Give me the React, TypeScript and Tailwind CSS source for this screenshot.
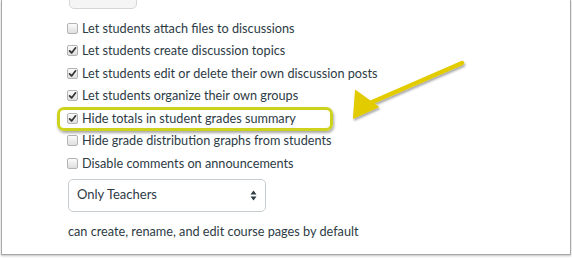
import React from 'react';

const rows: { label: string; checked: boolean }[] = [
  { label: 'Let students attach files to discussions', checked: false },
  { label: 'Let students create discussion topics', checked: true },
  { label: 'Let students edit or delete their own discussion posts', checked: true },
  { label: 'Let students organize their own groups', checked: true },
  { label: 'Hide totals in student grades summary', checked: true },
  { label: 'Hide grade distribution graphs from students', checked: false },
  { label: 'Disable comments on announcements', checked: false },
];

const Box = ({ checked }: { checked: boolean }) => (
  <span className="relative flex h-[11px] w-[11px] shrink-0 items-center justify-center rounded-[2px] border border-[#b4b4b4] bg-gradient-to-b from-[#fbfbfb] to-[#dedede]">
    {checked && (
      <svg width="9" height="9" viewBox="0 0 9 9">
        <path d="M1.6 4.8 L3.6 6.9 L7.6 1.8" fill="none" stroke="#333" strokeWidth="1.7" strokeLinecap="round" strokeLinejoin="round" />
      </svg>
    )}
  </span>
);

export default function App() {
  return (
    <div className="relative h-[258px] w-[572px] overflow-hidden bg-white" style={{ fontFamily: 'Lato, "Liberation Sans", sans-serif' }}>
      <div className="ml-[1px] flex h-[255px] w-[570px] flex-col border-x border-b border-[#a8a8a8] bg-white shadow-[0_1px_2px_rgba(0,0,0,0.25)]">
        {/* cut-off button from the section above */}
        <div className="ml-[67px] mt-[-24px] h-[33px] w-[68px] shrink-0 rounded-[5px] border border-[#d6d6d6] bg-[#f5f5f5]" />

        <div className="ml-[65px] mt-[8px] flex flex-col text-[12.7px] text-[#2d3b45]">
          {rows.map((r) => (
            <label key={r.label} className="flex h-[22.5px] items-center gap-[4px]">
              <Box checked={r.checked} />
              <span className="leading-none">{r.label}</span>
            </label>
          ))}

          <div className="ml-[1px] mt-[4px] flex h-[33px] w-[198px] items-center justify-between rounded-[5px] border border-[#c7cdd1] bg-white pl-[8px] pr-[8px] text-[13px]">
            <span>Only Teachers</span>
            <svg width="7" height="11" viewBox="0 0 7 11">
              <path d="M3.5 0.5 L6.5 4.5 L0.5 4.5 Z" fill="#2d3b45" />
              <path d="M3.5 10.5 L6.5 6.5 L0.5 6.5 Z" fill="#2d3b45" />
            </svg>
          </div>

          <p className="ml-[1px] mt-[13px] text-[12.7px] leading-none">can create, rename, and edit course pages by default</p>
        </div>
      </div>

      {/* annotation overlays */}
      <div className="absolute left-[57px] top-[107px] h-[24px] w-[276px] rounded-[7px] border-[3px] border-[#cdd21c] shadow-[1px_2px_3px_rgba(0,0,0,0.35)]" />
      <svg className="absolute left-[338px] top-[55px]" width="132" height="72" viewBox="0 0 132 72">
        <defs>
          <filter id="sh" x="-20%" y="-20%" width="140%" height="160%">
            <feDropShadow dx="1" dy="2" stdDeviation="1.2" floodColor="#000" floodOpacity="0.35" />
          </filter>
        </defs>
        <g filter="url(#sh)">
          <line x1="124" y1="8" x2="32" y2="48" stroke="#e2cc00" strokeWidth="4.5" strokeLinecap="round" />
          <path d="M10 59 L24 33 L39 59 Z" fill="#e2cc00" transform="rotate(-24 24 50)" />
        </g>
      </svg>
    </div>
  );
}
